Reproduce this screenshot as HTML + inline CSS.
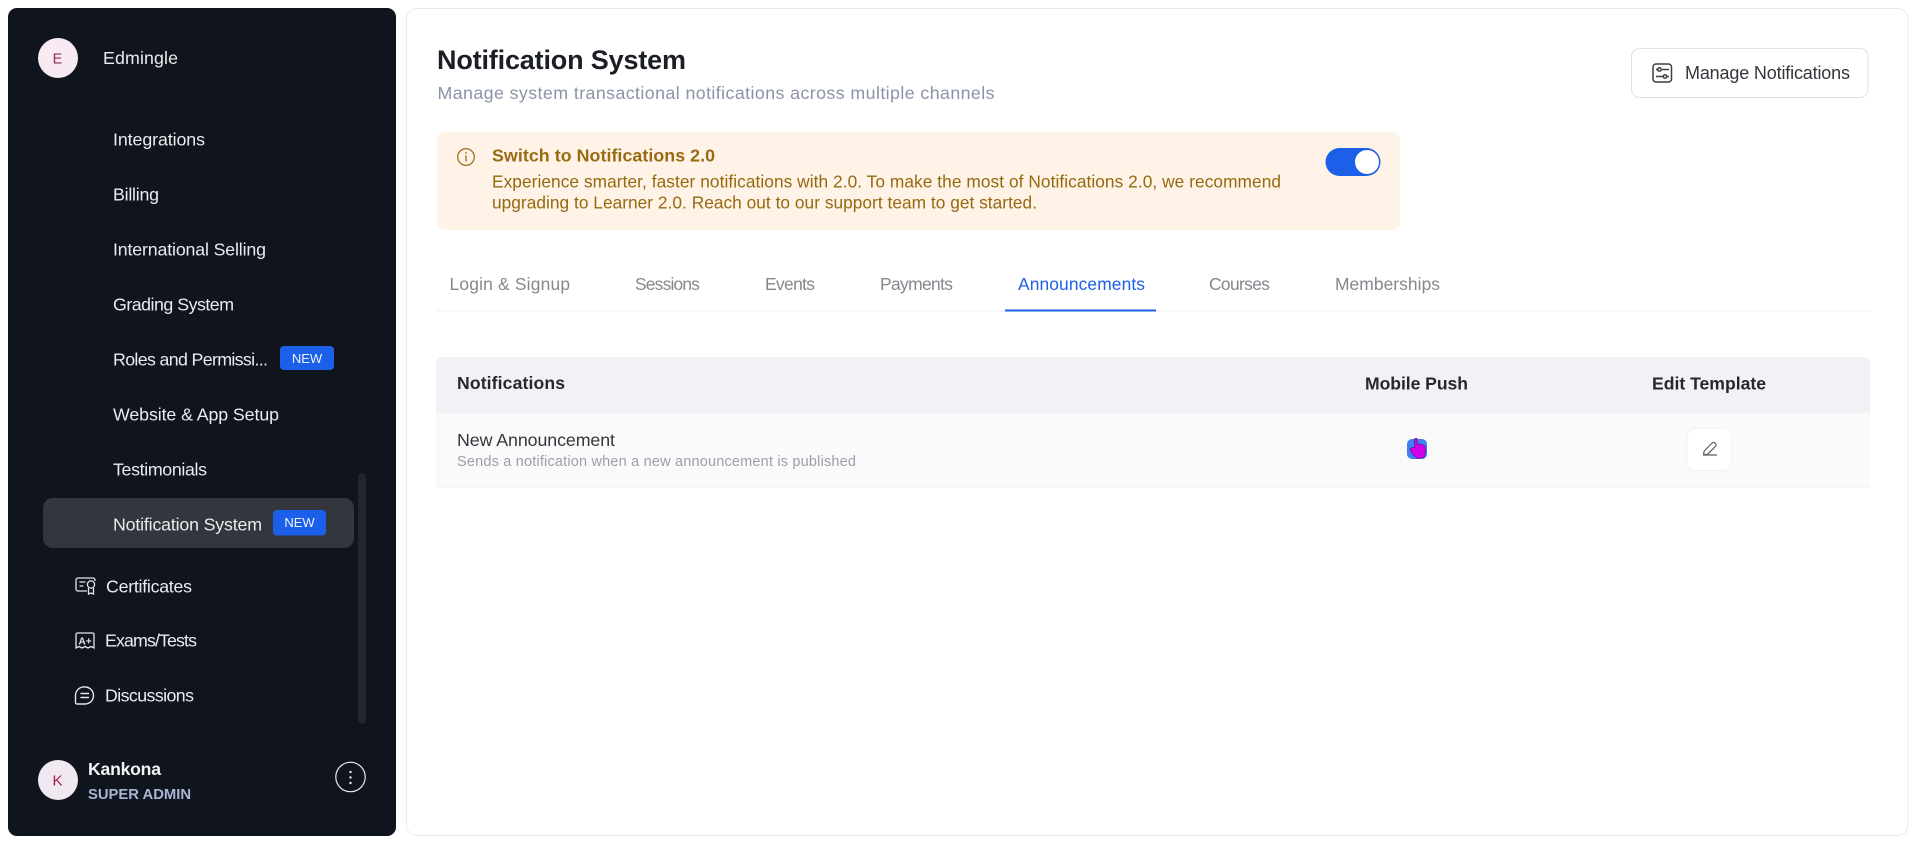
<!DOCTYPE html>
<html lang="en"><head><meta charset="utf-8"><title>Notification System</title>
<style>
html,body{margin:0;padding:0;background:#fff;width:1920px;height:846px;overflow:hidden}
svg{display:block;filter:blur(.35px)}
text{font-family:"Liberation Sans",Arial,sans-serif;white-space:pre}
.n{font-size:17.8px;fill:#e9ebee}
.t{font-size:17.4px;fill:#85878d}
.h{font-size:17.6px;font-weight:bold;fill:#26282d}
.w{font-size:17.3px;fill:#96690f}
.b{font-size:13px;fill:#eef3ff;text-anchor:middle}
</style></head><body>
<svg width="1920" height="846" viewBox="0 0 1920 846" xmlns="http://www.w3.org/2000/svg">
<rect width="1920" height="846" fill="#fff"/>
<!-- sidebar -->
<rect x="8" y="8" width="388" height="828" rx="9" fill="#10141c"/>
<circle cx="58" cy="58" r="20" fill="#f8eaf3"/>
<text x="57.500" y="63.500" font-size="14.500" fill="#8e2c5c" text-anchor="middle">E</text>
<text class="n" x="103" y="64" textLength="75" lengthAdjust="spacing" fill="#f3f4f6">Edmingle</text>
<text class="n" x="113" y="145.500" textLength="92" lengthAdjust="spacing">Integrations</text>
<text class="n" x="113" y="200.500" textLength="46" lengthAdjust="spacing">Billing</text>
<text class="n" x="113" y="255.500" textLength="153" lengthAdjust="spacing">International Selling</text>
<text class="n" x="113" y="310.500" textLength="121" lengthAdjust="spacing">Grading System</text>
<text class="n" x="113" y="365.500" textLength="155" lengthAdjust="spacing">Roles and Permissi...</text>
<rect x="280" y="346" width="54" height="24" rx="4" fill="#1c5fe8"/>
<text class="b" x="307" y="363">NEW</text>
<text class="n" x="113" y="420.500" textLength="166" lengthAdjust="spacing">Website &amp; App Setup</text>
<text class="n" x="113" y="475.500" textLength="94" lengthAdjust="spacing">Testimonials</text>
<rect x="43" y="498" width="311" height="50" rx="10" fill="#33363d"/>
<text class="n" x="113" y="530.500" textLength="149" lengthAdjust="spacing" fill="#f3f4f6">Notification System</text>
<rect x="273" y="510" width="53" height="25.500" rx="4" fill="#1c5fe8"/>
<text class="b" x="299.500" y="527">NEW</text>
<rect x="358" y="473" width="8" height="251" rx="4" fill="#21252c"/>
<!-- certificates icon -->
<g fill="none" stroke="#e4e6ea" stroke-width="1.300">
<path d="M87 591H78a2 2 0 0 1-2-2v-9a2 2 0 0 1 2-2h15a2 2 0 0 1 2 2v1"/>
<path d="M79.500 582h6M79.500 586h4"/>
<circle cx="91" cy="584.500" r="3.600"/>
<path d="M88.500 588v6l2.500-1 2.500 1v-6"/>
</g>
<text class="n" x="106" y="592.500" textLength="86" lengthAdjust="spacing">Certificates</text>
<!-- exams icon -->
<path d="M76 648v-13.500a1.500 1.500 0 0 1 1.500-1.500h15a1.500 1.500 0 0 1 1.500 1.500V648l-3-1.500-3 1.500-3-1.500-3 1.500-3-1.500-3 1.500z" fill="none" stroke="#e4e6ea" stroke-width="1.300"/>
<text x="85" y="644.500" font-size="10" font-weight="bold" fill="#e4e6ea" text-anchor="middle">A+</text>
<text class="n" x="105" y="646.500" textLength="92" lengthAdjust="spacing">Exams/Tests</text>
<!-- discussions icon -->
<g fill="none" stroke="#e4e6ea" stroke-width="1.400" stroke-linecap="round">
<path d="M85 687a8.500 8.500 0 1 1 0 17h-8a1.500 1.500 0 0 1-1.500-1.500v-7A8.500 8.500 0 0 1 85 687z"/>
<path d="M81 693.500h7.500M81 697.500h7.500"/>
</g>
<text class="n" x="105" y="701.500" textLength="89" lengthAdjust="spacing">Discussions</text>
<!-- footer -->
<circle cx="58" cy="780" r="20" fill="#f0e9f1"/>
<text x="57.500" y="785.500" font-size="15" fill="#a3154f" text-anchor="middle">K</text>
<text x="88" y="775" font-size="17.600" font-weight="bold" fill="#f3f4f6" textLength="73" lengthAdjust="spacing">Kankona</text>
<text x="88" y="799" font-size="14.800" font-weight="bold" fill="#a9b6d3" textLength="103" lengthAdjust="spacing">SUPER ADMIN</text>
<circle cx="350.500" cy="777" r="14.700" fill="none" stroke="#e8eaee" stroke-width="1.200"/>
<g fill="#e8eaee"><circle cx="350.500" cy="772" r="1.200"/><circle cx="350.500" cy="777.500" r="1.200"/><circle cx="350.500" cy="783" r="1.200"/></g>
<!-- main card -->
<rect x="406.500" y="8.500" width="1501.500" height="827" rx="10" fill="#fff" stroke="#e8ebee"/>
<text x="437" y="69" font-size="27" font-weight="bold" fill="#1b1e24" textLength="249" lengthAdjust="spacing">Notification System</text>
<text x="437.500" y="99" font-size="17.800" fill="#8b93a8" textLength="557" lengthAdjust="spacing">Manage system transactional notifications across multiple channels</text>
<!-- manage button -->
<rect x="1631.500" y="48.500" width="236.500" height="49" rx="8" fill="#fff" stroke="#dfe1e5"/>
<g fill="none" stroke="#3c3f45" stroke-width="1.500">
<rect x="1653" y="64" width="18.500" height="18" rx="3"/>
<path d="M1656 69.500h2M1662 69.500h7M1656 76.500h7M1667 76.500h2"/>
<circle cx="1659.500" cy="69.500" r="1.700"/><circle cx="1665" cy="76.500" r="1.700"/>
</g>
<text x="1685" y="79" font-size="18" fill="#33363c" textLength="165" lengthAdjust="spacing">Manage Notifications</text>
<!-- alert -->
<rect x="437" y="132" width="963" height="98" rx="9" fill="#fef3e6"/>
<circle cx="466" cy="157" r="8.300" fill="none" stroke="#a0722a" stroke-width="1.300"/>
<path d="M466 156v5" stroke="#a0722a" stroke-width="1.400" stroke-linecap="round"/>
<circle cx="466" cy="153" r=".9" fill="#a0722a"/>
<text x="492" y="161.500" font-size="17.800" font-weight="bold" fill="#9a6a13" textLength="223" lengthAdjust="spacing">Switch to Notifications 2.0</text>
<text class="w" x="492" y="187.500" textLength="789" lengthAdjust="spacing">Experience smarter, faster notifications with 2.0. To make the most of Notifications 2.0, we recommend</text>
<text class="w" x="492" y="208.500" textLength="545" lengthAdjust="spacing">upgrading to Learner 2.0. Reach out to our support team to get started.</text>
<rect x="1325.500" y="148" width="55" height="28" rx="14" fill="#1c5fe8"/>
<circle cx="1367" cy="162" r="12" fill="#fff"/>
<!-- tabs -->
<text class="t" x="449.500" y="290" textLength="120.500" lengthAdjust="spacing">Login &amp; Signup</text>
<text class="t" x="635" y="290" textLength="65" lengthAdjust="spacing">Sessions</text>
<text class="t" x="765" y="290" textLength="50" lengthAdjust="spacing">Events</text>
<text class="t" x="880" y="290" textLength="73" lengthAdjust="spacing">Payments</text>
<text class="t" x="1018" y="290" textLength="127" lengthAdjust="spacing" style="fill:#1c5fe8">Announcements</text>
<text class="t" x="1209" y="290" textLength="61" lengthAdjust="spacing">Courses</text>
<text class="t" x="1335" y="290" textLength="105" lengthAdjust="spacing">Memberships</text>
<rect x="436" y="310.500" width="1434" height="1" fill="#eff0f3"/>
<rect x="1005" y="309.500" width="151" height="2" fill="#1c5fe8"/>
<!-- table -->
<path d="M436 363a6 6 0 0 1 6-6h1422a6 6 0 0 1 6 6v50H436z" fill="#f1f2f6"/>
<text class="h" x="457" y="389" textLength="108" lengthAdjust="spacing">Notifications</text>
<text class="h" x="1365" y="389.500" textLength="103" lengthAdjust="spacing">Mobile Push</text>
<text class="h" x="1652" y="389.500" textLength="114" lengthAdjust="spacing">Edit Template</text>
<rect x="436" y="413" width="1434" height="74" fill="#fafafb"/>
<rect x="436" y="486.500" width="1434" height="1" fill="#eeeff2"/>
<text x="457" y="446" font-size="17.800" fill="#33363c" textLength="158" lengthAdjust="spacing">New Announcement</text>
<text x="457" y="466" font-size="14.500" fill="#9b9fab" textLength="399" lengthAdjust="spacing">Sends a notification when a new announcement is published</text>
<rect x="1407" y="439" width="20" height="20" rx="5" fill="#3f7ff0"/>
<path d="M1414.500 447.500v-8a1.300 1.300 0 0 1 2.800 0v5l1.500-.5 2.500.3 2.700 1 1.500 2v5l-1.500 5.500-7.500.5-3-3-3-4.500-.5-2 2.500-1.300z" fill="#d200e6" stroke="#3a0a66" stroke-width=".5"/>
<rect x="1687" y="428.500" width="44.500" height="42" rx="8" fill="#fff" stroke="#f1f2f4"/>
<g fill="none" stroke="#5c5f66" stroke-width="1.200" stroke-linejoin="round" stroke-linecap="round">
<path d="M1703.500 454.500l.7-3.500 8-8a1.800 1.800 0 0 1 2.600 0l.7.7a1.800 1.800 0 0 1 0 2.600l-8 8z"/>
<path d="M1703.500 455h13"/>
</g>
</svg>
</body></html>
